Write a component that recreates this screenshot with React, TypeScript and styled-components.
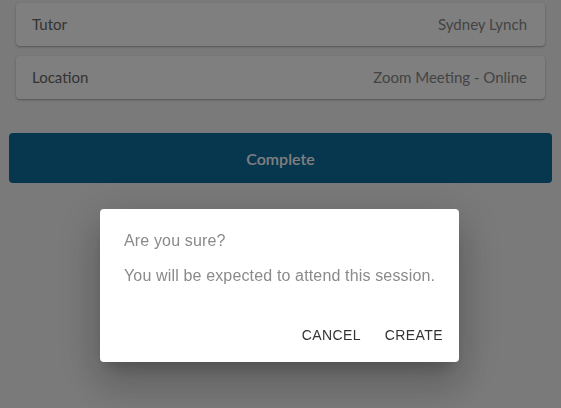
import React from "react";
import styled, { createGlobalStyle } from "styled-components";

const Global = createGlobalStyle`
  html, body { margin: 0; padding: 0; }
  body {
    background: #f5f5f5;
    font-family: Lato, "Noto Sans", sans-serif;
    width: 561px;
    height: 408px;
    overflow: hidden;
  }
`;

const Page = styled.div`
  display: flex;
  flex-direction: column;
  padding: 3px 9px 0;
  height: 408px;
  box-sizing: border-box;
`;

const Cards = styled.div`
  display: flex;
  flex-direction: column;
  gap: 10px;
  padding: 0 7px;
`;

const Card = styled.div`
  display: flex;
  align-items: center;
  justify-content: space-between;
  height: 43px;
  padding: 0 16px 2px;
  box-sizing: border-box;
  background: #ffffff;
  border-radius: 4px;
  box-shadow: 0 1px 3px rgba(0, 0, 0, 0.22), 0 1px 1px rgba(0, 0, 0, 0.12);
  font-size: 15px;
`;

const Label = styled.span`
  color: #666666;
`;

const Value = styled.span`
  color: #888888;
  margin-right: 2px;
`;

const PrimaryButton = styled.button`
  margin-top: 34px;
  height: 50px;
  border: none;
  border-radius: 4px;
  background: #0e6c9e;
  color: #ffffff;
  font-family: Lato, "Noto Sans", sans-serif;
  font-size: 16px;
  font-weight: 600;
`;

const Backdrop = styled.div`
  position: fixed;
  inset: 0;
  background: rgba(0, 0, 0, 0.5);
  display: flex;
  justify-content: center;
  align-items: flex-start;
  padding-top: 209px;
  box-sizing: border-box;
`;

const Dialog = styled.div`
  width: 359px;
  height: 153px;
  box-sizing: border-box;
  margin-left: -2px;
  background: #ffffff;
  border-radius: 4px;
  box-shadow: 0 11px 15px -7px rgba(0, 0, 0, 0.2), 0 24px 38px 3px rgba(0, 0, 0, 0.14),
    0 9px 46px 8px rgba(0, 0, 0, 0.12);
  display: flex;
  flex-direction: column;
  font-family: "Liberation Sans", Arial, sans-serif;
`;

const Content = styled.div`
  padding: 20px 24px 0;
  display: flex;
  flex-direction: column;
  gap: 11px;
`;

const Text = styled.p`
  margin: 0;
  font-size: 16px;
  line-height: 24px;
  letter-spacing: 0.15px;
  white-space: nowrap;
  color: #8a8a8a;
`;

const Actions = styled.div`
  margin-top: auto;
  padding: 8px 8px 9px;
  display: flex;
  justify-content: flex-end;
  gap: 8px;
`;

const TextButton = styled.button`
  min-width: 64px;
  height: 36px;
  padding: 6px 8px;
  border: none;
  background: transparent;
  font-family: "Liberation Sans", Arial, sans-serif;
  font-size: 14px;
  letter-spacing: 0.4px;
  text-transform: uppercase;
  color: #333333;
`;

const rows = [
  { label: "Tutor", value: "Sydney Lynch" },
  { label: "Location", value: "Zoom Meeting - Online" },
];

export default function App() {
  return (
    <>
      <Global />
      <Page>
        <Cards>
          {rows.map((r) => (
            <Card key={r.label}>
              <Label>{r.label}</Label>
              <Value>{r.value}</Value>
            </Card>
          ))}
        </Cards>
        <PrimaryButton>Complete</PrimaryButton>
      </Page>
      <Backdrop>
        <Dialog>
          <Content>
            <Text>Are you sure?</Text>
            <Text>You will be expected to attend this session.</Text>
          </Content>
          <Actions>
            <TextButton>Cancel</TextButton>
            <TextButton>Create</TextButton>
          </Actions>
        </Dialog>
      </Backdrop>
    </>
  );
}
